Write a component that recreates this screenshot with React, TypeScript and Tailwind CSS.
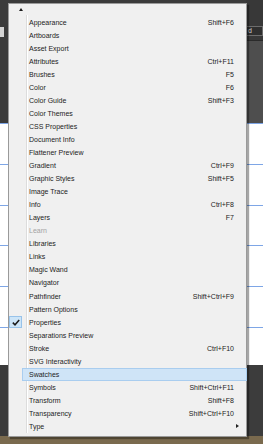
type Item = {
  label: string;
  shortcut?: string;
  disabled?: boolean;
  checked?: boolean;
  active?: boolean;
  submenu?: boolean;
};

const items: Item[] = [
  { label: "Appearance", shortcut: "Shift+F6" },
  { label: "Artboards" },
  { label: "Asset Export" },
  { label: "Attributes", shortcut: "Ctrl+F11" },
  { label: "Brushes", shortcut: "F5" },
  { label: "Color", shortcut: "F6" },
  { label: "Color Guide", shortcut: "Shift+F3" },
  { label: "Color Themes" },
  { label: "CSS Properties" },
  { label: "Document Info" },
  { label: "Flattener Preview" },
  { label: "Gradient", shortcut: "Ctrl+F9" },
  { label: "Graphic Styles", shortcut: "Shift+F5" },
  { label: "Image Trace" },
  { label: "Info", shortcut: "Ctrl+F8" },
  { label: "Layers", shortcut: "F7" },
  { label: "Learn", disabled: true },
  { label: "Libraries" },
  { label: "Links" },
  { label: "Magic Wand" },
  { label: "Navigator" },
  { label: "Pathfinder", shortcut: "Shift+Ctrl+F9" },
  { label: "Pattern Options" },
  { label: "Properties", checked: true },
  { label: "Separations Preview" },
  { label: "Stroke", shortcut: "Ctrl+F10" },
  { label: "SVG Interactivity" },
  { label: "Swatches", active: true },
  { label: "Symbols", shortcut: "Shift+Ctrl+F11" },
  { label: "Transform", shortcut: "Shift+F8" },
  { label: "Transparency", shortcut: "Shift+Ctrl+F10" },
  { label: "Type", submenu: true },
];

const GuideRow = ({ h }: { h: string }) => (
  <div className={`flex flex-col ${h}`}>
    <div className="h-px bg-[#7ea6e6]" />
    <div className="flex-1 bg-white" />
  </div>
);

const MenuRow = ({ item }: { item: Item }) => {
  return (
    <div className="relative flex h-[13.06px] items-center">
      {item.active && (
        <div className="absolute inset-y-0 left-[13px] right-[-1px] border border-[#a9cdef] bg-[#cfe4f7]" />
      )}
      <div className="relative flex w-[13px] shrink-0 items-center justify-center self-stretch">
        {item.checked && (
          <div className="flex h-[12px] w-[13px] items-center justify-center border border-[#98c3ea] bg-[#cde5f8]">
            <svg width="8" height="7" viewBox="0 0 8 7">
              <path d="M0.8 3.6 L3 5.8 L7.2 0.9" fill="none" stroke="#1b1b1b" strokeWidth="1.5" />
            </svg>
          </div>
        )}
      </div>
      <span
        className={`relative ml-[7px] flex-1 whitespace-nowrap text-[7px] leading-none ${
          item.disabled ? "text-[#a3a3a3]" : "text-[#1c1c1c]"
        }`}
      >
        {item.label}
      </span>
      {item.shortcut && (
        <span className="relative mr-[12px] whitespace-nowrap text-[7px] leading-none text-[#1c1c1c]">
          {item.shortcut}
        </span>
      )}
      {item.submenu && (
        <span className="relative mr-[7px] h-0 w-0 border-y-[2.5px] border-l-[3px] border-y-transparent border-l-[#222]" />
      )}
    </div>
  );
};

export default function App() {
  return (
    <div
      className="relative h-[444px] w-[263px] overflow-hidden bg-white"
      style={{ fontFamily: '"Liberation Sans", Arial, sans-serif' }}
    >
      {/* background canvas behind the menu */}
      <div className="flex h-full flex-col">
        <div className="flex h-[123px]">
          <div className="relative w-[8px] bg-[#3b3b3b]">
            <div className="absolute left-0 top-[27px] h-[10px] w-[4px] bg-[#d4d4d4]" />
          </div>
          <div className="flex-1 bg-[#3b3b3b]" />
          <div className="flex w-[17px] flex-col">
            <div className="flex h-[40px] flex-col bg-[#383838] pt-[26px]">
              <div className="flex h-[10px] items-center border border-l-0 border-[#6d6d6d] bg-[#2f2f2f] pl-[2px] text-[7px] text-[#cfcfcf]">
                d
              </div>
            </div>
            <div className="h-px bg-[#2a2a2a]" />
            <div className="flex-1 bg-[#4e4e4e]" />
          </div>
        </div>
        <GuideRow h="h-[41px]" />
        <GuideRow h="h-[41px]" />
        <GuideRow h="h-[40px]" />
        <GuideRow h="h-[41px]" />
        <GuideRow h="h-[41px]" />
        <GuideRow h="h-[38px]" />
        <div className="flex h-[71px]">
          <div className="w-[8px] bg-[#3a3a3a]" />
          <div className="flex-1 bg-[#3c3c3c]" />
        </div>
        <div className="flex-1 bg-[#7a6a4e]" />
      </div>

      {/* panel menu */}
      <div className="absolute left-[8px] top-[3px] flex h-[434px] w-[239px] flex-col border border-[#9a9a9a] bg-[#f0f0f0] shadow-[2px_2px_1px_rgba(0,0,0,0.35)]">
        <div className="absolute bottom-[3px] left-[17px] top-[11px] w-px bg-[#dcdcdc]" />
        <div className="absolute bottom-[3px] left-[18px] top-[11px] w-px bg-white" />
        <div className="flex h-[11.5px] items-center pl-[10px]">
          <span className="h-0 w-0 border-x-[2.5px] border-b-[3px] border-x-transparent border-b-[#1a1a1a]" />
        </div>
        {items.map((item) => (
          <MenuRow key={item.label} item={item} />
        ))}
      </div>
    </div>
  );
}
